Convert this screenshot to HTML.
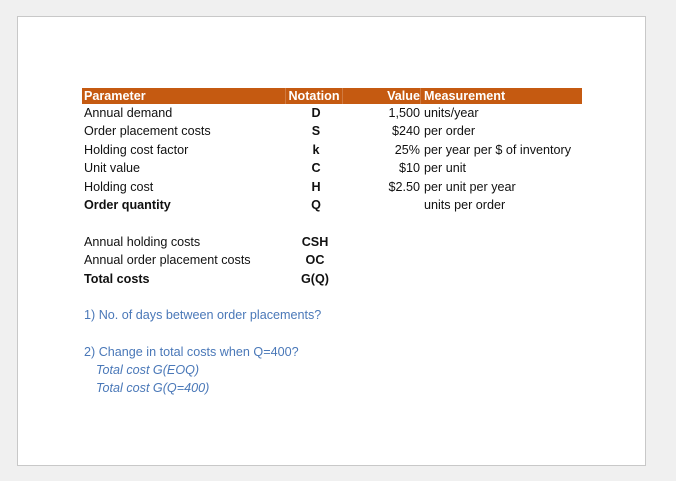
<!DOCTYPE html>
<html><head><style>
body{margin:0;width:676px;height:481px;background:#f0f0f0;position:relative;overflow:hidden;font-family:"Liberation Sans",Arial,sans-serif;font-size:12.6px;color:#111}
.sheet{position:absolute;left:17px;top:16px;width:629px;height:450px;background:#fff;border:1px solid #c8c8c8;box-sizing:border-box}
.t{position:absolute;white-space:nowrap;line-height:14px}
.hdr{position:absolute;left:82px;top:88px;width:500px;height:16px;background:#c55a11}
.sep{position:absolute;top:88px;width:1px;height:16px;background:#d07a40}
.w{color:#fff;font-weight:bold}
.b{font-weight:bold}
.c{text-align:center;width:60px;margin-left:-30px}
.r{text-align:right}
.blue{color:#4a78b8}
.i{font-style:italic}
</style></head><body>
<div class="sheet"></div>
<div class="hdr"></div>
<div class="sep" style="left:285px"></div>
<div class="sep" style="left:342px"></div>
<div class="sep" style="left:420px"></div>
<div class="t w" style="left:84px;top:89px">Parameter</div>
<div class="t w c" style="left:314px;top:89px">Notation</div>
<div class="t w r" style="right:256px;top:89px">Value</div>
<div class="t w" style="left:424px;top:89px">Measurement</div>

<div class="t" style="left:84px;top:106px">Annual demand</div>
<div class="t" style="left:84px;top:124px">Order placement costs</div>
<div class="t" style="left:84px;top:143px">Holding cost factor</div>
<div class="t" style="left:84px;top:161px">Unit value</div>
<div class="t" style="left:84px;top:180px">Holding cost</div>
<div class="t b" style="left:84px;top:198px">Order quantity</div>

<div class="t b c" style="left:316px;top:106px">D</div>
<div class="t b c" style="left:316px;top:124px">S</div>
<div class="t b c" style="left:316px;top:143px">k</div>
<div class="t b c" style="left:316px;top:161px">C</div>
<div class="t b c" style="left:316px;top:180px">H</div>
<div class="t b c" style="left:316px;top:198px">Q</div>

<div class="t r" style="right:256px;top:106px">1,500</div>
<div class="t r" style="right:256px;top:124px">$240</div>
<div class="t r" style="right:256px;top:143px">25%</div>
<div class="t r" style="right:256px;top:161px">$10</div>
<div class="t r" style="right:256px;top:180px">$2.50</div>

<div class="t" style="left:424px;top:106px">units/year</div>
<div class="t" style="left:424px;top:124px">per order</div>
<div class="t" style="left:424px;top:143px">per year per $ of inventory</div>
<div class="t" style="left:424px;top:161px">per unit</div>
<div class="t" style="left:424px;top:180px">per unit per year</div>
<div class="t" style="left:424px;top:198px">units per order</div>

<div class="t" style="left:84px;top:235px">Annual holding costs</div>
<div class="t" style="left:84px;top:253px">Annual order placement costs</div>
<div class="t b" style="left:84px;top:272px">Total costs</div>
<div class="t b c" style="left:315px;top:235px">CSH</div>
<div class="t b c" style="left:315px;top:253px">OC</div>
<div class="t b c" style="left:315px;top:272px">G(Q)</div>

<div class="t blue" style="left:84px;top:308px">1) No. of days between order placements?</div>
<div class="t blue" style="left:84px;top:345px">2) Change in total costs when Q=400?</div>
<div class="t blue i" style="left:96px;top:363px">Total cost G(EOQ)</div>
<div class="t blue i" style="left:96px;top:381px">Total cost G(Q=400)</div>
</body></html>
